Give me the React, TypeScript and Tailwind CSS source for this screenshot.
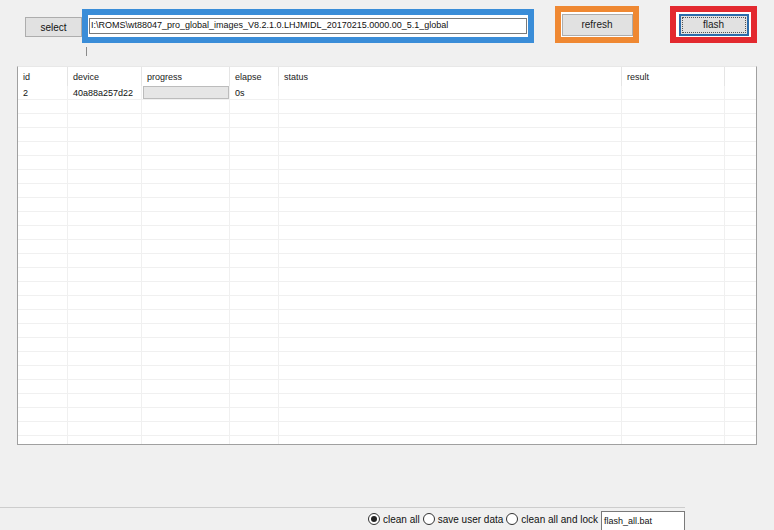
import React from "react";

const cols = [
  { key: "id", label: "id", w: 50 },
  { key: "device", label: "device", w: 74 },
  { key: "progress", label: "progress", w: 88 },
  { key: "elapse", label: "elapse", w: 49 },
  { key: "status", label: "status", w: 343 },
  { key: "result", label: "result", w: 103 },
];

const EMPTY_ROWS = 25;

function WinButton({ label, focused = false }: { label: string; focused?: boolean }) {
  if (focused) {
    return (
      <div className="w-[70px] h-[22px] border-2 border-[#2c6cab] bg-[#e1e1e1] p-px">
        <div className="h-full border border-dotted border-[#555] flex items-center justify-center text-[10px] text-[#1a1a1a]">
          {label}
        </div>
      </div>
    );
  }
  return (
    <div className="w-[71px] h-[22px] border border-[#adadad] bg-[#e1e1e1] flex items-center justify-center text-[10px] text-[#1a1a1a]">
      {label}
    </div>
  );
}

function Radio({ checked, label }: { checked?: boolean; label: string }) {
  return (
    <div className="flex items-center gap-[3px]">
      <div className="w-[12px] h-[12px] rounded-full border border-[#333] bg-white flex items-center justify-center">
        {checked && <div className="w-[6px] h-[6px] rounded-full bg-[#222]" />}
      </div>
      <span className="text-[10px] text-[#111]">{label}</span>
    </div>
  );
}

export default function App() {
  return (
    <div
      className="w-[774px] h-[530px] bg-[#f0f0f0] flex flex-col overflow-hidden text-[#111]"
      style={{ fontFamily: '"Liberation Sans", Arial, sans-serif' }}
    >
      {/* top bar */}
      <div className="flex items-start h-[43px] shrink-0">
        <div className="ml-[25px] mt-[17px] w-[57px] h-[20px] border border-[#adadad] bg-[#e1e1e1] flex items-center justify-center text-[10px]">
          select
        </div>
        <div className="mt-[9px] w-[452px] h-[34px] border-[6px] border-[#3a8dd8] bg-white px-px py-[3px]">
          <div className="h-[16px] border border-[#7a7a7a] bg-white flex items-center pl-[1px] text-[9px] whitespace-nowrap overflow-hidden">
            I:\ROMS\wt88047_pro_global_images_V8.2.1.0.LHJMIDL_20170215.0000.00_5.1_global
          </div>
        </div>
        <div className="ml-[21px] mt-[6px] w-[84px] h-[37px] border-[6px] border-[#ef8832] bg-white flex items-center justify-center">
          <WinButton label="refresh" />
        </div>
        <div className="ml-[31px] mt-[6px] w-[87px] h-[37px] border-[6px] border-[#e3292f] bg-white flex items-center justify-center">
          <WinButton label="flash" focused />
        </div>
      </div>

      <div className="ml-[86px] mt-[4px] w-px h-[9px] bg-[#8a8a8a] shrink-0" />

      {/* list view */}
      <div className="ml-[17px] mt-[10px] w-[740px] h-[379px] shrink-0 bg-white border border-[#a0a0a0] border-t-[#e8e8e8] overflow-hidden relative">
        <div className="flex h-[19px] text-[9px] text-[#222]">
          {cols.map((c) => (
            <div
              key={c.key}
              className="h-full border-r border-[#e5e5e5] flex items-center pl-[5px] pt-[3px] shrink-0"
              style={{ width: c.w }}
            >
              {c.label}
            </div>
          ))}
          <div className="flex-1 h-full" />
        </div>
        <div className="flex h-[14px] border-b border-[#f0f0f0] text-[9px]">
          <div className="w-[50px] border-r border-[#f0f0f0] pl-[5px] pt-[2px] flex items-center shrink-0">2</div>
          <div className="w-[74px] border-r border-[#f0f0f0] pl-[5px] pt-[2px] flex items-center shrink-0">40a88a257d22</div>
          <div className="w-[88px] border-r border-[#f0f0f0] flex items-center shrink-0 pl-px">
            <div className="w-[86px] h-[13px] bg-[#e6e6e6] border border-[#bcbcbc]" />
          </div>
          <div className="w-[49px] border-r border-[#f0f0f0] pl-[5px] pt-[2px] flex items-center shrink-0">0s</div>
          <div className="w-[343px] border-r border-[#f0f0f0] shrink-0" />
          <div className="w-[103px] border-r border-[#f0f0f0] shrink-0" />
          <div className="flex-1" />
        </div>
        {Array.from({ length: EMPTY_ROWS }).map((_, i) => (
          <div key={i} className="flex h-[14px] border-b border-[#f0f0f0]">
            {cols.map((c) => (
              <div key={c.key} className="h-full border-r border-[#f0f0f0] shrink-0" style={{ width: c.w }} />
            ))}
            <div className="flex-1" />
          </div>
        ))}
      </div>

      <div className="flex-1" />

      {/* bottom strip */}
      <div className="w-[685px] h-px bg-[#cdcdcd] shrink-0" />
      <div className="h-[22px] flex items-center shrink-0 pl-[368px] gap-[3px]">
        <Radio checked label="clean all" />
        <Radio label="save user data" />
        <Radio label="clean all and lock" />
        <div className="self-end w-[84px] h-[19px] border border-[#7a7a7a] border-b-0 bg-white text-[9px] pl-[2px] pt-[3px]">
          flash_all.bat
        </div>
      </div>
    </div>
  );
}
